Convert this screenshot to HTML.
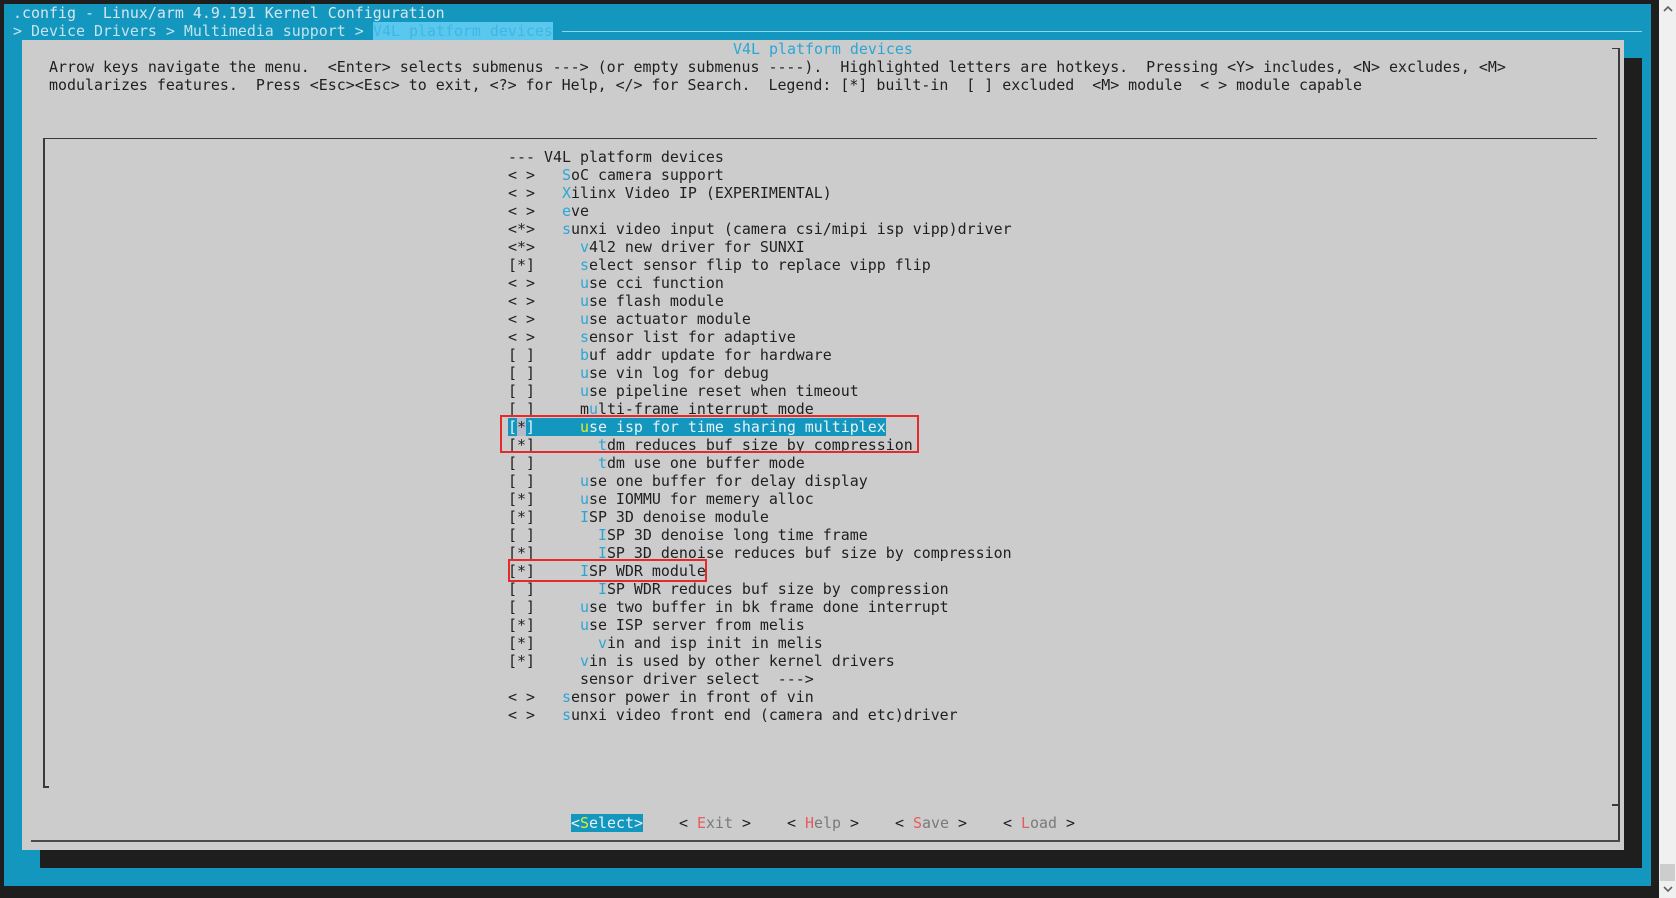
<!DOCTYPE html>
<html><head><meta charset="utf-8"><style>
html,body{margin:0;padding:0;background:#1e1e1e;width:1676px;height:898px;overflow:hidden;position:relative}
.a{position:absolute}
.r{position:absolute;font-family:"DejaVu Sans Mono","Liberation Mono",monospace;font-size:14.95px;line-height:18px;white-space:pre;color:#1f1f1f;height:18px}
.h{color:#2aa6d6}
.t{color:#d6e6ee}
.bc{color:#c2e2ee}
.y{color:#e2ec2a}
.rd{color:#e85a60}
.g{color:#7a7a7a}
.w{color:#e6f2f6}
</style></head><body>
<div class="a" style="left:4px;top:4px;width:1647px;height:882px;background:#1497bf"></div>
<div class="a" style="left:22px;top:40px;width:1602px;height:810px;background:#cccccc"></div>
<div class="a" style="left:1624px;top:58px;width:18px;height:810px;background:#1e1e1e"></div>
<div class="a" style="left:40px;top:850px;width:1602px;height:18px;background:#1e1e1e"></div>
<div class="a" style="left:1659px;top:0;width:17px;height:898px;background:#f0f0f0"></div>
<div class="a" style="left:1660px;top:864px;width:15px;height:17px;background:#cdcdcd"></div>
<svg class="a" style="left:1661px;top:4px" width="14" height="10"><path d="M3 7 L7 3 L11 7" stroke="#606060" stroke-width="1.6" fill="none"/></svg>
<svg class="a" style="left:1661px;top:884px" width="14" height="10"><path d="M3 3 L7 7 L11 3" stroke="#606060" stroke-width="1.6" fill="none"/></svg>

<div class="a" style="left:562px;top:31px;width:1080px;height:1px;background:#8fd6ec"></div>
<div class="a" style="left:373px;top:22px;width:180px;height:18px;background:#5ac8ee"></div>

<div class="a" style="left:1618px;top:48px;width:2px;height:793px;background:#3a3a3a"></div>
<div class="a" style="left:1612px;top:48px;width:7px;height:1px;background:#3a3a3a"></div>
<div class="a" style="left:31px;top:840px;width:1589px;height:2px;background:#4a4a4a"></div>
<div class="a" style="left:1612px;top:804px;width:6px;height:2px;background:#3a3a3a"></div>
<div class="a" style="left:43px;top:138px;width:1554px;height:1px;background:#3a3a3a"></div>
<div class="a" style="left:43px;top:138px;width:2px;height:650px;background:#3a3a3a"></div>
<div class="a" style="left:43px;top:786px;width:6px;height:2px;background:#3a3a3a"></div>

<div class="a" style="left:508px;top:418px;width:378px;height:18px;background:#1497bf"></div>
<div class="a" style="left:517px;top:418px;width:9px;height:18px;background:#b6bccb"></div>
<div class="a" style="left:571px;top:814px;width:72px;height:18px;background:#1497bf"></div>

<div class="r t" style="left:13px;top:4px">.config - Linux/arm 4.9.191 Kernel Configuration</div>
<div class="r bc" style="left:13px;top:22px">&gt; Device Drivers &gt; Multimedia support &gt; </div>
<div class="r" style="left:373px;top:22px;color:#40b6e0">V4L platform devices</div>
<div class="r" style="left:733px;top:40px;color:#2aa6d6">V4L platform devices</div>
<div class="r" style="left:49px;top:58px">Arrow keys navigate the menu.  &lt;Enter&gt; selects submenus ---&gt; (or empty submenus ----).  Highlighted letters are hotkeys.  Pressing &lt;Y&gt; includes, &lt;N&gt; excludes, &lt;M&gt;</div>
<div class="r" style="left:49px;top:76px">modularizes features.  Press &lt;Esc&gt;&lt;Esc&gt; to exit, &lt;?&gt; for Help, &lt;/&gt; for Search.  Legend: [*] built-in  [ ] excluded  &lt;M&gt; module  &lt; &gt; module capable</div>

<div class="r" style="left:508px;top:148px">--- V4L platform devices</div>
<div class="r" style="left:508px;top:166px">&lt; &gt;   <span class="h">S</span>oC camera support</div>
<div class="r" style="left:508px;top:184px">&lt; &gt;   <span class="h">X</span>ilinx Video IP (EXPERIMENTAL)</div>
<div class="r" style="left:508px;top:202px">&lt; &gt;   <span class="h">e</span>ve</div>
<div class="r" style="left:508px;top:220px">&lt;*&gt;   <span class="h">s</span>unxi video input (camera csi/mipi isp vipp)driver</div>
<div class="r" style="left:508px;top:238px">&lt;*&gt;     <span class="h">v</span>4l2 new driver for SUNXI</div>
<div class="r" style="left:508px;top:256px">[*]     <span class="h">s</span>elect sensor flip to replace vipp flip</div>
<div class="r" style="left:508px;top:274px">&lt; &gt;     <span class="h">u</span>se cci function</div>
<div class="r" style="left:508px;top:292px">&lt; &gt;     <span class="h">u</span>se flash module</div>
<div class="r" style="left:508px;top:310px">&lt; &gt;     <span class="h">u</span>se actuator module</div>
<div class="r" style="left:508px;top:328px">&lt; &gt;     <span class="h">s</span>ensor list for adaptive</div>
<div class="r" style="left:508px;top:346px">[ ]     <span class="h">b</span>uf addr update for hardware</div>
<div class="r" style="left:508px;top:364px">[ ]     <span class="h">u</span>se vin log for debug</div>
<div class="r" style="left:508px;top:382px">[ ]     <span class="h">u</span>se pipeline reset when timeout</div>
<div class="r" style="left:508px;top:400px">[ ]     m<span class="h">u</span>lti-frame interrupt mode</div>
<div class="r w" style="left:508px;top:418px">[<span style="color:#222">*</span>]     <span class="y">u</span>se isp for time sharing multiplex</div>
<div class="r" style="left:508px;top:436px">[*]       <span class="h">t</span>dm reduces buf size by compression</div>
<div class="r" style="left:508px;top:454px">[ ]       <span class="h">t</span>dm use one buffer mode</div>
<div class="r" style="left:508px;top:472px">[ ]     <span class="h">u</span>se one buffer for delay display</div>
<div class="r" style="left:508px;top:490px">[*]     <span class="h">u</span>se IOMMU for memery alloc</div>
<div class="r" style="left:508px;top:508px">[*]     <span class="h">I</span>SP 3D denoise module</div>
<div class="r" style="left:508px;top:526px">[ ]       <span class="h">I</span>SP 3D denoise long time frame</div>
<div class="r" style="left:508px;top:544px">[*]       <span class="h">I</span>SP 3D denoise reduces buf size by compression</div>
<div class="r" style="left:508px;top:562px">[*]     <span class="h">I</span>SP WDR module</div>
<div class="r" style="left:508px;top:580px">[ ]       <span class="h">I</span>SP WDR reduces buf size by compression</div>
<div class="r" style="left:508px;top:598px">[ ]     <span class="h">u</span>se two buffer in bk frame done interrupt</div>
<div class="r" style="left:508px;top:616px">[*]     <span class="h">u</span>se ISP server from melis</div>
<div class="r" style="left:508px;top:634px">[*]       <span class="h">v</span>in and isp init in melis</div>
<div class="r" style="left:508px;top:652px">[*]     <span class="h">v</span>in is used by other kernel drivers</div>
<div class="r" style="left:508px;top:670px">        sensor driver select  ---&gt;</div>
<div class="r" style="left:508px;top:688px">&lt; &gt;   <span class="h">s</span>ensor power in front of vin</div>
<div class="r" style="left:508px;top:706px">&lt; &gt;   <span class="h">s</span>unxi video front end (camera and etc)driver</div>

<div class="r w" style="left:571px;top:814px">&lt;<span class="y">S</span>elect&gt;</div>
<div class="r" style="left:679px;top:814px">&lt; <span class="rd">E</span><span class="g">xit</span> &gt;</div>
<div class="r" style="left:787px;top:814px">&lt; <span class="rd">H</span><span class="g">elp</span> &gt;</div>
<div class="r" style="left:895px;top:814px">&lt; <span class="rd">S</span><span class="g">ave</span> &gt;</div>
<div class="r" style="left:1003px;top:814px">&lt; <span class="rd">L</span><span class="g">oad</span> &gt;</div>

<div class="a" style="left:500px;top:415px;width:415px;height:34px;border:2px solid #e42a2a"></div>
<div class="a" style="left:508px;top:559px;width:195px;height:19px;border:2px solid #e42a2a"></div>
</body></html>
